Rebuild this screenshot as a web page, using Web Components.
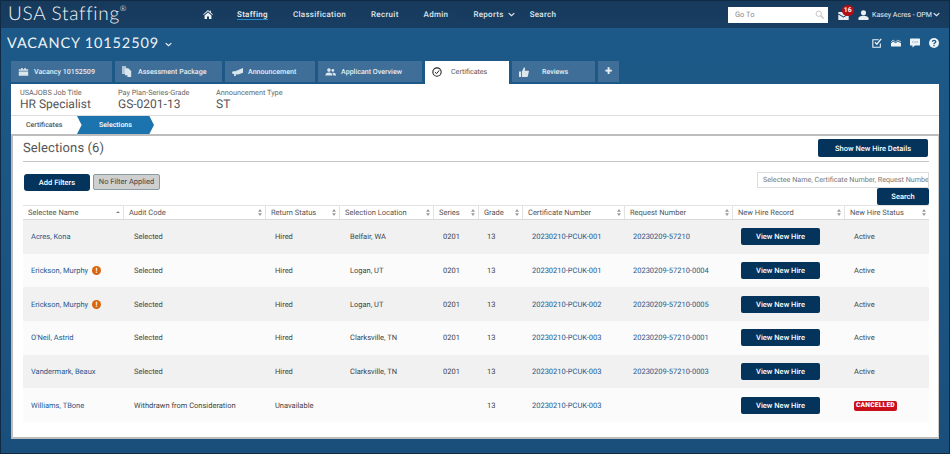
<!DOCTYPE html>
<html><head><meta charset="utf-8"><title>Selections</title>
<style>
html,body{margin:0;padding:0;height:100%}
body{font-family:Roboto,"Noto Sans",sans-serif;width:950px;height:454px;overflow:hidden;text-rendering:geometricPrecision}
</style></head><body>
<usa-app></usa-app>
<script>
const I={
home:'<svg viewBox="0 0 12 11" width="10" height="9"><path fill="currentColor" d="M6 0 0 5.400l.7.7L6 1.600l5.300 4.500.7-.7L9.500 3.200V.8H8v1.200zM1.800 6.600V11h3V7.800h2.400V11h3V6.600L6 3z"/></svg>',
chev:'<svg viewBox="0 0 10 6" width="7" height="5"><path fill="none" stroke="currentColor" stroke-width="1.800" d="M1 1l4 3.600L9 1"/></svg>',
cal:'<svg viewBox="0 0 14 11" width="11" height="9"><path fill="currentColor" d="M1 2.500h3V1h2v1.500h2V1h2v1.500h3V4.500H1zM1 5.500h12V11H1z"/></svg>',
docs:'<svg viewBox="0 0 12 13" width="10" height="11"><path fill="currentColor" d="M0 0h5v9.500H0z" opacity=".75"/><path fill="currentColor" d="M3.500 2.500h4l3.500 3.500v7H6.500V11H3.500z"/></svg>',
horn:'<svg viewBox="0 0 14 10" width="11" height="8"><path fill="currentColor" d="M14 0 4 4H1L0 6l1 1.500 2 .2L2.500 10h2.300l.5-2 2.500.3L14 6z"/></svg>',
users:'<svg viewBox="0 0 14 10" width="11" height="8"><circle fill="currentColor" cx="5" cy="2.600" r="2.300"/><path fill="currentColor" d="M.5 9.500c0-3 1.500-4 4.500-4s4.500 1 4.500 4z"/><circle fill="currentColor" cx="10" cy="3" r="1.800"/><path fill="currentColor" d="M10.500 9.500H14c0-2.500-1-3.500-3.500-3.500-.5 0-1 0-1.300.2 1 .8 1.300 2 1.300 3.300z"/></svg>',
check:'<svg viewBox="0 0 12 12" width="10" height="10"><circle cx="6" cy="6" r="5" fill="none" stroke="#222" stroke-width="1.300"/><path d="M3.500 6l2 2 3-3.800" fill="none" stroke="#222" stroke-width="1.200"/></svg>',
thumb:'<svg viewBox="0 0 12 12" width="10" height="10"><path fill="currentColor" d="M0 5.500h2.500V12H0zM3.500 5.500 6 .2c1.300.2 1.500 1.500 1 4.300h4.300c.8 0 .8 1.500.3 2l-1 4.700c-.2.5-.6.8-1 .8H3.500z"/></svg>',
mag:'<svg viewBox="0 0 12 12" width="9" height="9"><circle cx="5" cy="5" r="3.600" fill="none" stroke="currentColor" stroke-width="1.300"/><path stroke="currentColor" stroke-width="1.800" d="M7.800 7.800 11.500 11.500"/></svg>',
mail:'<svg viewBox="0 0 13 10" width="11" height="8"><path fill="currentColor" d="M0 0h13v1.800L6.500 5.500 0 1.800zM0 3.200l6.500 3.700L13 3.200V10H0z"/></svg>',
user:'<svg viewBox="0 0 11 11" width="11" height="10"><circle fill="currentColor" cx="5.500" cy="3" r="2.800"/><path fill="currentColor" d="M0 11V9c0-1.800 2-2.800 5.500-2.800S11 7.200 11 9v2z"/></svg>',
task:'<svg viewBox="0 0 12 12" width="10" height="10"><path fill="none" stroke="currentColor" stroke-width="1.300" d="M10 6.500V11H1V2h7"/><path fill="none" stroke="currentColor" stroke-width="1.600" d="M3.500 5l2.300 2.500L11 1"/></svg>',
chart:'<svg viewBox="0 0 14 10" width="13" height="10"><path fill="none" stroke="currentColor" stroke-width="1" d="M0 3.500 3 1l3.500 2.500L9.500 1 14 3.500"/><path fill="currentColor" d="M0 5.500 3 3l3.500 2.500L9.500 3 14 5.500V10H0z"/></svg>',
cmt:'<svg viewBox="0 0 12 11" width="11" height="10"><path fill="currentColor" d="M1 0h10a1 1 0 0 1 1 1v6.500a1 1 0 0 1-1 1H6L3 11V8.500H1a1 1 0 0 1-1-1V1a1 1 0 0 1 1-1z"/><path stroke="#1d5a87" d="M3 4.300h1M5.500 4.300h1M8 4.300h1"/></svg>',
help:'<svg viewBox="0 0 11 11" width="10" height="10"><circle cx="5.500" cy="5.500" r="5.500" fill="currentColor"/><path fill="none" stroke="#1d5a87" stroke-width="1.500" d="M3.800 4.200c0-2.200 3.600-2.200 3.600 0 0 1.400-1.900 1.300-1.900 2.600"/><path stroke="#1d5a87" stroke-width="1.400" d="M5.500 7.700v1.400"/></svg>',
sort:'<svg viewBox="0 0 5 9" width="4" height="7"><path fill="#999" d="M2.500 0 5 3.400H0zM2.500 9 5 5.600H0z"/></svg>',
sortUp:'<svg viewBox="0 0 5 9" width="4" height="7"><path fill="#777" d="M2.500 3 5 5H0z"/></svg>'
};
const F='Roboto,"Noto Sans",sans-serif';
function def(name,css,html,init){
  customElements.define(name,class extends HTMLElement{
    constructor(){super();const r=this.attachShadow({mode:'open'});
      r.innerHTML='<style>'+css+'</style>'+(typeof html==='function'?html(this):html);}
    connectedCallback(){if(init)init(this)}
  });
}
def('nav-link',`:host{display:flex;align-items:center;gap:4px;height:100%;color:#dfe7ee;font:500 8px ${F};letter-spacing:.3px;white-space:nowrap}
:host([on]) span{border-bottom:1px solid #2a8fd0;color:#eef3f7;padding:1px 0 0}
:host([menu]){margin-right:-10px}
span{padding:1px 0 1px}svg{display:block}`,h=>`<span><slot></slot></span>${h.hasAttribute('menu')?I.chev:''}`);
def('app-header',`:host{display:flex;align-items:center;height:27px;border-top:1px solid #0f2a42;background:linear-gradient(#173a5c,#183e62);color:#fff}
.logo{width:198px;padding-left:7px;box-sizing:border-box;font:300 19px Lato,sans-serif;letter-spacing:.7px;color:#f2f5f8;white-space:nowrap;position:relative;top:-1px}
.logo sup{font-size:8px;vertical-align:9px;line-height:0;letter-spacing:0}
.home{width:38px;display:flex;padding-left:4px;box-sizing:border-box;color:#eef2f6}
nav{display:flex;gap:25px;align-items:center;height:100%}
.right{margin-left:auto;display:flex;align-items:center;height:100%}
.goto{width:100px;height:16px;background:#fff;display:flex;align-items:center;justify-content:space-between;padding:0 4px 0 7px;box-sizing:border-box;color:#888;font:7.500px ${F};margin-right:10px}
.goto svg{color:#c4c4c4}
.mail{position:relative;width:20px;display:flex;color:#e6edf3;height:8px;margin-top:2px}
.badge{position:absolute;left:4px;top:-7px;width:11.500px;height:11.500px;border-radius:50%;background:#b20f16;color:#fff;font:700 6.800px/11.500px ${F};text-align:center}
.user{display:flex;align-items:center;gap:3px;font:7.100px ${F};color:#e8eef3;white-space:nowrap}
.who{width:60px}
.end{margin:0 9px 0 1px;color:#e4ebf1;display:flex}`,
`<div class="logo">USA Staffing<sup>®</sup></div><div class="home">${I.home}</div>
<nav><nav-link on>Staffing</nav-link><nav-link>Classification</nav-link><nav-link>Recruit</nav-link><nav-link>Admin</nav-link><nav-link menu>Reports</nav-link><nav-link>Search</nav-link></nav>
<div class="right"><div class="goto"><span>Go To</span>${I.mag}</div><div class="mail">${I.mail}<span class="badge">16</span></div>
<div class="user">${I.user}<span class="who">Kasey Acres - OPM</span></div><div class="end">${I.chev}</div></div>`);
def('vacancy-bar',`:host{display:flex;align-items:center;height:33px;box-sizing:border-box;padding:0 0 3px 6px;color:#eef3f7}
h1{margin:0;font:400 14.500px Lato,${F};letter-spacing:.85px;white-space:nowrap}
.c{margin-left:6px;display:flex;margin-top:2px}
.ic{margin-left:auto;display:flex;gap:9px;align-items:center;padding-right:10px}
.ic>*{display:flex;width:10px;justify-content:center}`,
`<h1>VACANCY 10152509</h1><div class="c">${I.chev}</div><div class="ic"><span>${I.task}</span><span>${I.chart}</span><span>${I.cmt}</span><span>${I.help}</span></div>`);
def('tab-item',`:host{display:block;box-sizing:border-box;height:21px;background:#3f6f98;color:#e6edf3;font:500 7.100px ${F};white-space:nowrap}
:host([on]){background:#fff;color:#555;height:23px;font-weight:400}
.t{display:flex;align-items:center;height:21.500px;padding-left:7px}
.i{width:16px;display:flex;flex:none;color:#dbe5ec}
:host([c]) .t{justify-content:center;padding:0;font-size:13px;font-weight:700}`,
h=>`<div class="t">${h.getAttribute('i')?`<span class="i">${I[h.getAttribute('i')]}</span>`:''}<span class="l" style="${h.getAttribute('ls')||''}"><slot></slot></span></div>`);
def('tab-bar',`:host{display:flex;align-items:flex-start;height:23px;padding-left:10px;gap:3px}`,`<slot></slot>`);
def('info-item',`:host{display:block;color:#666;font:7.300px/9px ${F};white-space:nowrap}
b{display:block;font:400 12px/14px ${F};color:#555}`,
h=>`<slot></slot><b>${h.getAttribute('v')}</b>`);
def('info-strip',`:host{display:flex;background:#fff;border-bottom:1px solid #ddd;padding:4px 0 0 9px;box-sizing:border-box;height:32px}`,`<slot></slot>`);
def('crumb-bar',`:host{display:flex;align-items:center;height:18px;background:#fff;font:500 7px ${F};color:#555}
.a{width:66px;padding-left:15px;box-sizing:border-box}
.b{width:77px;height:18px;background:#1c74ae;color:#fff;display:flex;align-items:center;justify-content:center;clip-path:polygon(0 0,94% 0,100% 50%,94% 100%,0 100%,6% 50%)}`,
`<div class="a">Certificates</div><div class="b">Selections</div>`);
def('dark-btn',`:host{display:inline-flex;align-items:center;justify-content:center;box-sizing:border-box;background:#04345c;color:#fff;border-radius:2px;font:500 7.500px ${F};white-space:nowrap}`,`<slot></slot>`);
def('warn-dot',`:host{display:inline-block;width:9px;height:9px;border-radius:50%;background:#d9650f;color:#fff;font:700 7.500px/9px ${F};text-align:center;margin-left:4px;vertical-align:0}`,`!`);
const cols='101px 142px 74px 94px 45px 44px 102px 108px 112px 84px';
const pad=[8,10,9,10,9,8,9,8,8,9];
const rows=[
['Acres, Kona',0,'Selected','Hired','Belfair, WA','0201','13','20230210-PCUK-001','20230209-57210','Active'],
['Erickson, Murphy',1,'Selected','Hired','Logan, UT','0201','13','20230210-PCUK-001','20230209-57210-0004','Active'],
['Erickson, Murphy',1,'Selected','Hired','Logan, UT','0201','13','20230210-PCUK-002','20230209-57210-0005','Active'],
["O'Neil, Astrid",0,'Selected','Hired','Clarksville, TN','0201','13','20230210-PCUK-003','20230209-57210-0001','Active'],
['Vandermark, Beaux',0,'Selected','Hired','Clarksville, TN','0201','13','20230210-PCUK-003','20230209-57210-0003','Active'],
['Williams, TBone',0,'Withdrawn from Consideration','Unavailable','','','13','20230210-PCUK-003','','CANCELLED']];
const hd=['Selectee Name','Audit Code','Return Status','Selection Location','Series','Grade','Certificate Number','Request Number','New Hire Record','New Hire Status'];
def('sel-table',`:host{display:block;font:7.500px ${F};color:#444;white-space:nowrap}
.r{display:grid;grid-template-columns:${cols};align-items:center}
.h{border-top:1px solid #e2e2e2;border-bottom:1.500px solid #d9d9d9;color:#555;box-sizing:border-box;height:15px}
.h>div{display:flex;justify-content:space-between;align-items:center;height:100%;padding:0 3px 0 5px;border-right:1px solid #e2e2e2;box-sizing:border-box}
.h>div:last-child{border:0}
.b{height:33.700px}
.b:nth-child(odd){background:#f1f1f1}.b:nth-child(even){background:#fbfbfb}
a{color:#2a5a8c;text-decoration:none}
.c{display:inline-block;background:#c8101a;color:#fff;font:900 6.700px/9.500px ${F};padding:0 2px;border-radius:2px;letter-spacing:.2px}
dark-btn{width:79px;height:17px}`,
()=>`<div class="r h">${hd.map((t,i)=>`<div><span>${t}</span>${i?I.sort:I.sortUp}</div>`).join('')}</div>`+
rows.map(r=>{const cells=[`<a>${r[0]}</a>${r[1]?'<warn-dot></warn-dot>':''}`,r[2],r[3],r[4],r[5],r[6],`<a>${r[7]}</a>`,`<a>${r[8]}</a>`,'<dark-btn>View New Hire</dark-btn>',r[9]=='CANCELLED'?'<span class="c">CANCELLED</span>':r[9]];
return `<div class="r b">${cells.map((c,i)=>`<div style="padding-left:${pad[i]}px">${c}</div>`).join('')}</div>`}).join(''));
def('sel-panel',`:host{display:block;background:#fff;border:2px solid #bdbdbd;border-right:1px solid #ccc;height:305px;padding:3px 9px 0 10px;box-sizing:border-box}
.top{display:flex;justify-content:space-between;align-items:flex-start;height:22px;border-bottom:1px solid #c4c4c4;padding-right:1px}
h2{margin:0;font:400 13px/20px ${F};color:#555;letter-spacing:.1px}
.top dark-btn{width:110px;height:18px}
.fil{display:flex;justify-content:space-between;height:43px;box-sizing:border-box;padding-top:12px}
.l{display:flex;gap:3px;padding-left:1px}
.l dark-btn{width:66px;height:17px;border-radius:3px}
.nf{width:67px;height:16px;box-sizing:border-box;background:#cfcfcf;border:1px solid #8a9aa5;border-radius:2px;color:#444;font:7.500px/14px ${F};text-align:center;white-space:nowrap}
.s{display:flex;flex-direction:column;align-items:flex-end;margin-top:-2px}
.inp{width:172px;height:16px;box-sizing:border-box;border:1px solid #ddd;color:#777;font:7.200px/14px ${F};padding-left:5px;overflow:hidden;white-space:nowrap}
.s dark-btn{width:52px;height:17px}`,
`<div class="top"><h2>Selections (6)</h2><dark-btn>Show New Hire Details</dark-btn></div>
<div class="fil"><div class="l"><dark-btn>Add Filters</dark-btn><div class="nf">No Filter Applied</div></div><div class="s"><div class="inp">Selectee Name, Certificate Number, Request Number</div><dark-btn>Search</dark-btn></div></div>
<sel-table></sel-table>`);
def('usa-app',`:host{display:block;width:950px;height:454px;box-sizing:border-box;background:linear-gradient(#1d5a89,#1a4f7b);border:1px solid #0f2a42;border-top:0}
.card{margin:0 10px}`,
`<app-header></app-header><vacancy-bar></vacancy-bar>
<tab-bar><tab-item i="cal" style="width:101px">Vacancy 10152509</tab-item><tab-item i="docs" style="width:107px">Assessment Package</tab-item><tab-item i="horn" style="width:90px">Announcement</tab-item><tab-item i="users" style="width:104px">Applicant Overview</tab-item><tab-item on i="check" ls="padding-left:3px" style="width:84px">Certificates</tab-item><tab-item i="thumb" ls="padding-left:7px" style="width:83px">Reviews</tab-item><tab-item c style="width:21px">+</tab-item></tab-bar>
<div class="card"><info-strip><info-item v="HR Specialist" style="width:98px">USAJOBS Job Title</info-item><info-item v="GS-0201-13" style="width:98px">Pay Plan-Series-Grade</info-item><info-item v="ST">Announcement Type</info-item></info-strip><crumb-bar></crumb-bar><sel-panel></sel-panel></div>`);
</script></body></html>
